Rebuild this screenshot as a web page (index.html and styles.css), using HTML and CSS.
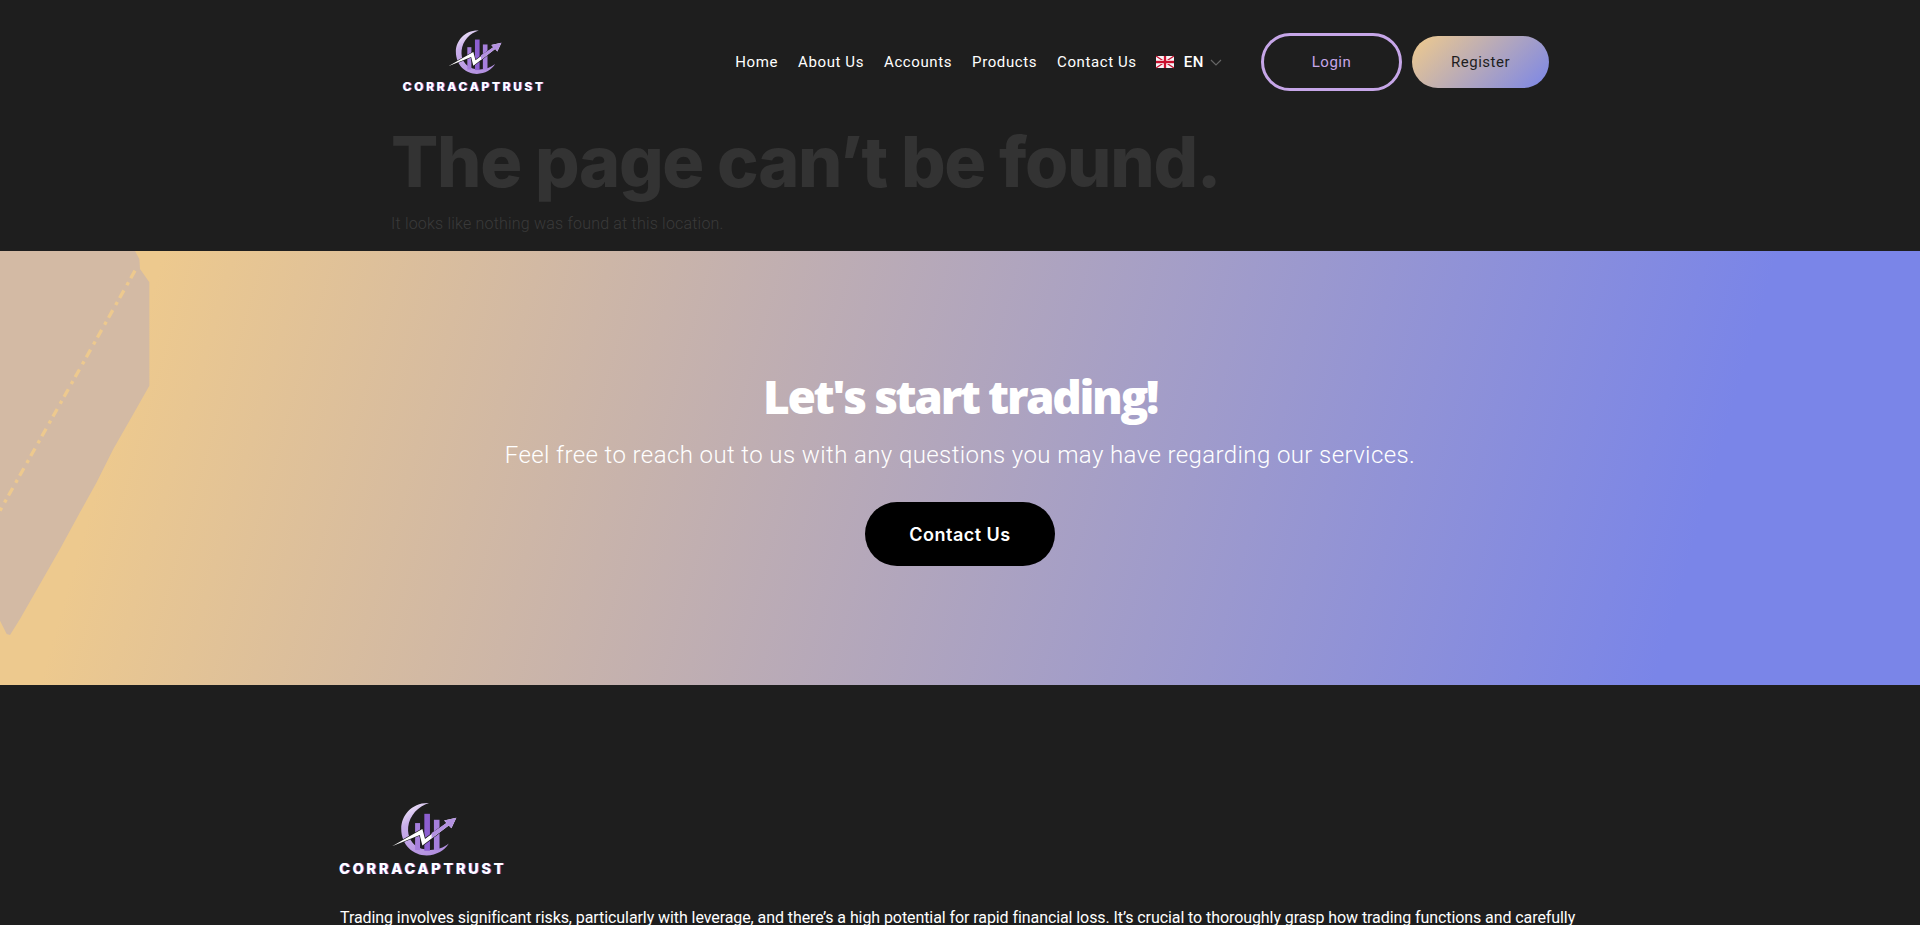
FILE: index.html
```html
<!DOCTYPE html>
<html lang="en">
<head>
    <meta charset="UTF-8" />
    <meta name="viewport" content="width=device-width, initial-scale=1.0"/>
    <title>Page not found - Corracaptrust</title>
    <link rel="stylesheet" href="styles.css">
</head>
<body>
<svg class="defs" width="0" height="0" aria-hidden="true">
    <defs>
        <linearGradient id="moon" x1="0" y1="0" x2="0.6" y2="1">
            <stop offset="0" stop-color="#ffffff"/>
            <stop offset="0.35" stop-color="#c9aeea"/>
            <stop offset="1" stop-color="#b391e0"/>
        </linearGradient>
        <symbol id="logo-mark" viewBox="180 65 200 165">
            <path d="M292 67 C240 65 208 105 208 145 C208 195 245 226 285 226 C315 226 340 210 352 190 C330 208 300 214 270 206 C240 196 226 170 229 140 C233 105 260 76 292 67 Z" fill="url(#moon)"/>
            <rect x="250" y="128" width="15" height="82" fill="#a67fdc"/>
            <rect x="278" y="100" width="17" height="112" fill="#8d5fd0"/>
            <rect x="307" y="118" width="17" height="92" fill="#a67fdc"/>
            <path d="M180 198 L272 146 L280 176 L345 128 L338 120 L375 112 L360 144 L352 135 L272 196 L264 164 Z" fill="#ffffff" stroke="#1e1e1e" stroke-width="4" paint-order="stroke"/>
            <path d="M300 158 L345 128 L338 120 L375 112 L360 144 L352 135 L300 175 Z" fill="#b391e0"/>
        </symbol>
    </defs>
</svg>

<div class="page">
    <header class="site-header">
        <a class="logo" href="#">
            <svg class="logo-icon"><use href="#logo-mark"/></svg>
            <span class="logo-name">CORRACAPTRUST</span>
        </a>
        <nav class="main-nav">
            <a href="#">Home</a>
            <a href="#">About Us</a>
            <a href="#">Accounts</a>
            <a href="#">Products</a>
            <a href="#">Contact Us</a>
            <div class="lang">
                <svg class="flag" viewBox="0 0 60 40">
                    <rect width="60" height="40" fill="#f4f4f8"/>
                    <path d="M0 0 L60 40 M60 0 L0 40" stroke="#c8102e" stroke-width="4"/>
                    <path d="M30 0 V40 M0 20 H60" stroke="#ffffff" stroke-width="14"/>
                    <path d="M30 0 V40 M0 20 H60" stroke="#c8102e" stroke-width="8"/>
                </svg>
                <span>EN</span>
                <svg class="chevron" viewBox="0 0 12 7"><path d="M1 1 L6 6 L11 1" fill="none" stroke="#666" stroke-width="1.2"/></svg>
            </div>
        </nav>
        <div class="auth">
            <a class="btn-login" href="#">Login</a>
            <a class="btn-register" href="#">Register</a>
        </div>
    </header>

    <section class="not-found">
        <h1>The page can’t be found.</h1>
        <p>It looks like nothing was found at this location.</p>
    </section>

    <section class="cta">
        <svg class="cta-shape" viewBox="0 36 450 1155" aria-hidden="true">
            <path d="M0 36 L405 36 L418 60 L420 90 L448 130 L448 440 L400 525 L340 630 L290 730 L240 820 L180 930 L120 1035 L60 1140 L30 1188 L20 1185 L0 1145 Z" fill="#d3baa4"/>
            <path d="M405 95 L0 815" fill="none" stroke="#edc98e" stroke-width="10" stroke-dasharray="26 14 10 18"/>
        </svg>
        <h2>Let's start trading!</h2>
        <p>Feel free to reach out to us with any questions you may have regarding our services.</p>
        <a class="btn-contact" href="#">Contact Us</a>
    </section>

    <footer class="site-footer">
        <a class="logo logo-large" href="#">
            <svg class="logo-icon"><use href="#logo-mark"/></svg>
            <span class="logo-name">CORRACAPTRUST</span>
        </a>
        <p>Trading involves significant risks, particularly with leverage, and there’s a high potential for rapid financial loss. It’s crucial to thoroughly grasp how trading functions and carefully assess your risk tolerance before you begin.</p>
    </footer>
</div>
</body>
</html>
```

FILE: styles.css
```css
* {
    box-sizing: border-box;
}
html, body {
    margin: 0;
    padding: 0;
}
body {
    font-family: Roboto, "Liberation Sans", sans-serif;
    background: #1e1e1e;
    color: #fff;
}
a {
    color: inherit;
    text-decoration: none;
}
.defs {
    display: block;
    height: 0;
}
.page {
    height: 100vh;
    overflow: hidden;
}

/* header */
.site-header {
    display: flex;
    align-items: center;
    height: 124px;
    padding: 0 371px 0 403px;
}
.logo {
    display: flex;
    flex-direction: column;
    align-items: center;
    width: 142px;
}
.logo-icon {
    display: block;
    width: 55px;
    height: 45px;
    margin-left: 2px;
}
.logo-name {
    font-family: Inter, sans-serif;
    font-weight: 800;
    font-size: 12px;
    line-height: 14px;
    margin-top: 5px;
    letter-spacing: 2.6px;
    white-space: nowrap;
    text-shadow: 1px 0 0 #8d5fd0;
}
.main-nav {
    display: flex;
    align-items: center;
    gap: 20px;
    margin-left: auto;
    font-size: 15px;
    letter-spacing: 0.6px;
}
.lang {
    display: flex;
    align-items: center;
    margin-left: -1px;
    font-weight: 500;
}
.flag {
    width: 18px;
    height: 14px;
    margin-right: 10px;
}
.chevron {
    width: 12px;
    height: 7px;
    margin-left: 6px;
}
.auth {
    display: flex;
    align-items: center;
    gap: 10px;
    margin-left: 39px;
    font-size: 15px;
    letter-spacing: 0.5px;
}
.btn-login {
    display: flex;
    align-items: center;
    justify-content: center;
    width: 141px;
    height: 58px;
    border: 3px solid #c6a6e8;
    border-radius: 29px;
    color: #c6a6e8;
}
.btn-register {
    display: flex;
    align-items: center;
    justify-content: center;
    width: 137px;
    height: 52px;
    border-radius: 26px;
    color: #1e1e1e;
    background: linear-gradient(135deg, #f0cb8c 0%, #7b86e8 100%);
}

/* 404 block, nearly the same colour as the page */
.not-found {
    display: flex;
    flex-direction: column;
    height: 127px;
    padding-left: 391px;
    color: #333;
}
.not-found h1 {
    margin: -2px 0 0;
    font-family: Inter, sans-serif;
    font-weight: 800;
    font-size: 70px;
    line-height: 80px;
    letter-spacing: -1.3px;
}
.not-found p {
    margin: 10px 0 0;
    font-size: 16px;
    font-weight: 300;
    line-height: 24px;
    letter-spacing: 0.2px;
    color: #3a3a3a;
}

/* call to action */
.cta {
    position: relative;
    display: flex;
    flex-direction: column;
    align-items: center;
    height: 434px;
    padding-top: 116px;
    background: linear-gradient(106deg, #edc98e 8%, #7a85e8 87%);
}
.cta-shape {
    position: absolute;
    left: 0;
    top: 0;
    width: 150px;
    height: 385px;
}
.cta h2 {
    position: relative;
    margin: 0;
    font-family: "Open Sans", sans-serif;
    font-weight: 800;
    font-size: 46px;
    line-height: 58px;
    letter-spacing: -2.4px;
}
.cta p {
    position: relative;
    margin: 12px 0 0;
    font-size: 24px;
    font-weight: 300;
    line-height: 36px;
    letter-spacing: 0.4px;
}
.btn-contact {
    position: relative;
    display: flex;
    align-items: center;
    justify-content: center;
    width: 190px;
    height: 64px;
    margin-top: 29px;
    border-radius: 32px;
    background: #000;
    font-family: Inter, sans-serif;
    font-weight: 600;
    font-size: 18px;
    letter-spacing: 0.5px;
}

/* footer */
.site-footer {
    padding: 117px 340px 0;
}
.logo-large {
    width: 165px;
}
.logo-large .logo-icon {
    width: 66px;
    height: 55px;
    margin-left: 5px;
}
.logo-large .logo-name {
    font-size: 14.5px;
    line-height: 16px;
    margin-top: 4px;
    letter-spacing: 2.7px;
}
.site-footer p {
    margin: 28px 0 0;
    font-size: 16px;
    line-height: 26px;
    letter-spacing: -0.08px;
}
```
